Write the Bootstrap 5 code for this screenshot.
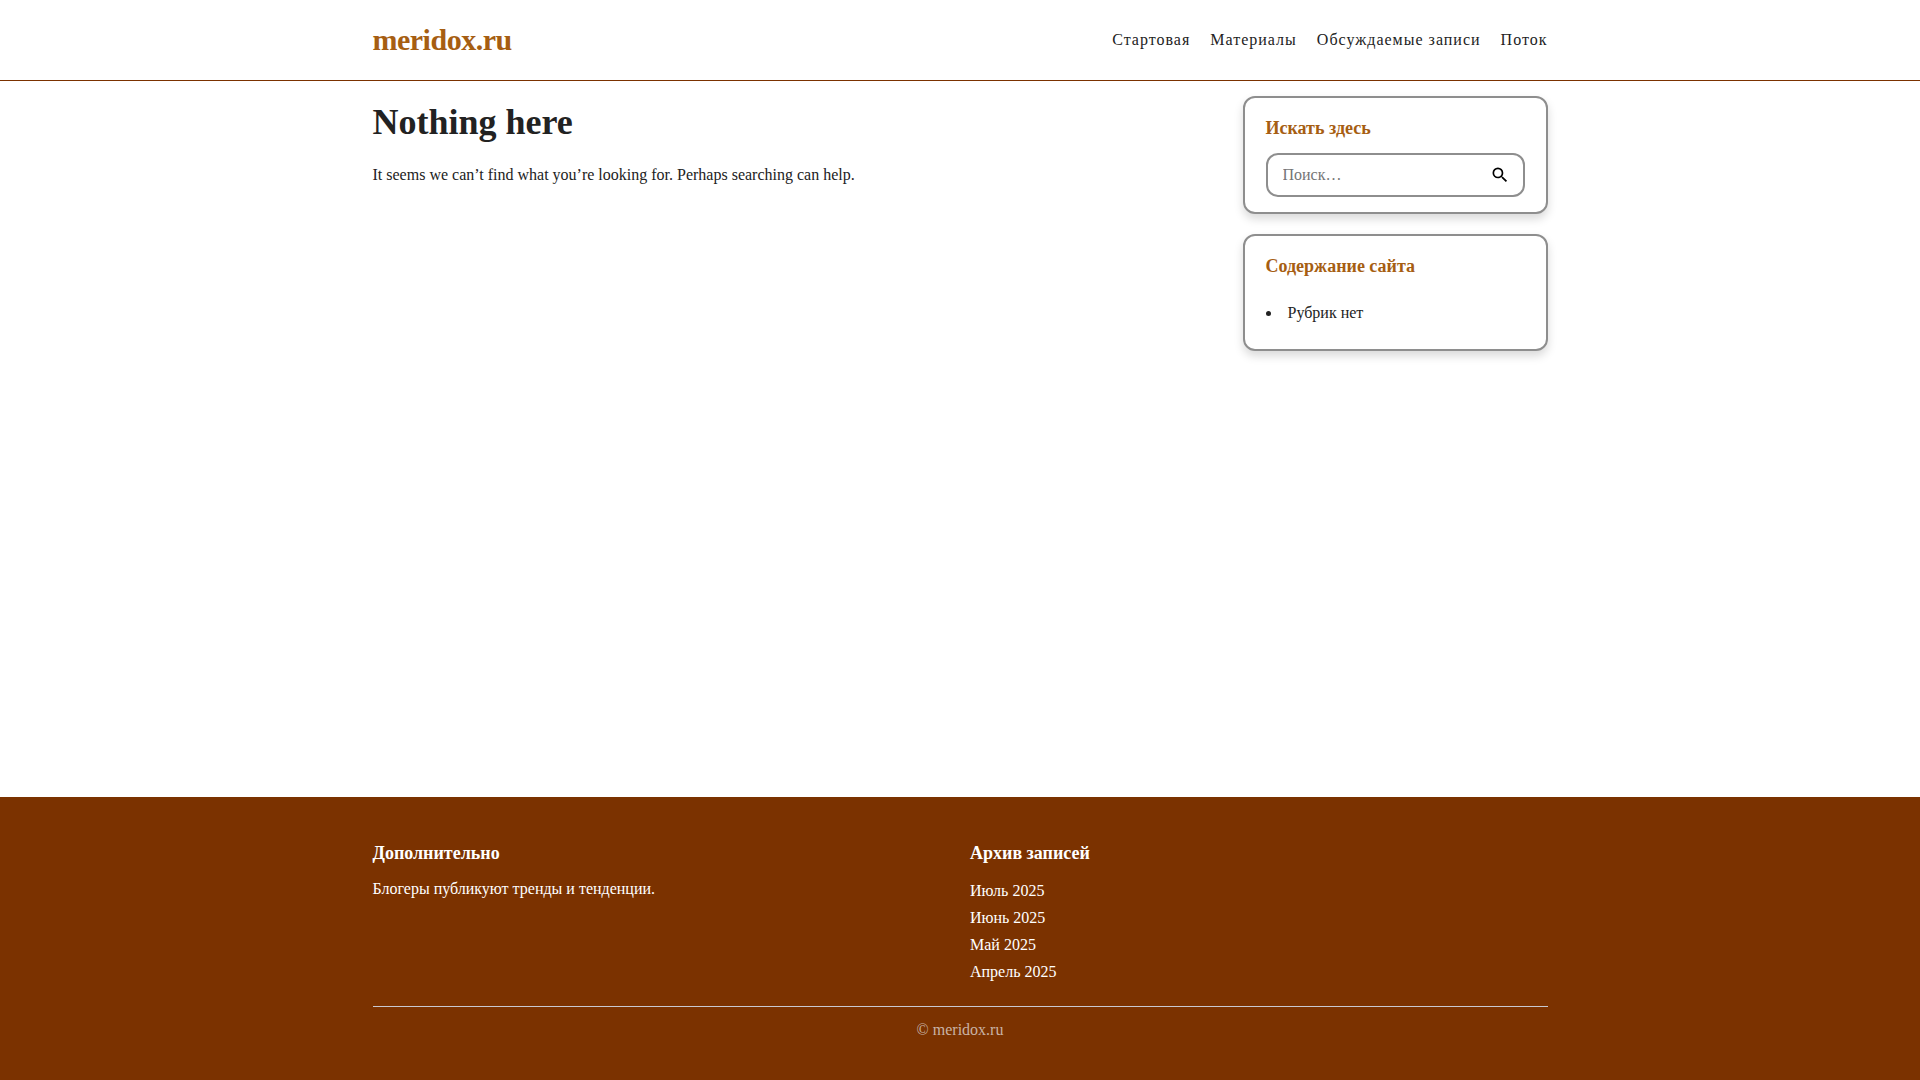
<!DOCTYPE html>
<html lang="ru">
<head>
<meta charset="utf-8">
<meta name="viewport" content="width=device-width, initial-scale=1">
<title>meridox.ru</title>
<link href="https://cdn.jsdelivr.net/npm/bootstrap@5.3.0/dist/css/bootstrap.min.css" rel="stylesheet">
<style>
  body { font-family: "Liberation Serif", "Times New Roman", serif; font-size: 16px; line-height: 24px; color: #222; background: #fff; }
  a { color: inherit; text-decoration: none; }
  a:hover { text-decoration: underline; }
  .site-wrap { width: 100%; max-width: 1215px; margin: 0 auto; padding: 0 20px; }
  .site-header { border-bottom: 1px solid #7b3200; }
  .site-bar { min-height: 80px; }
  .site-logo { font-size: 30px; line-height: 40px; font-weight: 700; letter-spacing: -0.5px; color: #a65e12; }
  .site-nav { gap: 20px; letter-spacing: 1px; }
  .site-main { padding-top: 15px; padding-bottom: 20px; }
  .page-title { font-size: 36px; line-height: 52px; font-weight: 700; margin: 0 0 15px; }
  .site-side { width: 305px; gap: 20px; }
  .widget { border: 2px solid #8e8e8e; border-radius: 12px; padding: 15px 21px; box-shadow: 0 5px 10px rgba(0,0,0,.15); background: #fff; }
  .widget-title { font-size: 18px; line-height: 30px; font-weight: 700; color: #a65e12; margin: 0 0 10px; }
  .search-box { height: 44px; border: 2px solid #8e8e8e; border-radius: 12px; padding: 0 13px; }
  .search-box input { color: #222; border: 0; outline: 0; background: transparent; padding: 0 2px; min-width: 0; }
  .search-box input::placeholder { color: #757575; opacity: 1; }
  .search-box button { border: 0; background: transparent; color: #000; padding: 0; }
  .rubrics { list-style: disc inside; margin: 0; padding: 10px 0 9px; }
  .site-footer { background: #7b3200; color: #fff; padding: 40px 0 38px; }
  .foot-title { font-size: 18px; line-height: 32px; font-weight: 700; margin: 0 0 8px; }
  .foot-cols { --bs-gutter-x: 20px; }
  .archive { line-height: 27px; }
  .foot-copy { margin-top: 21px; padding-top: 11px; border-top: 1px solid #c8c8d0; color: #c9b3a5; }
</style>
</head>
<body class="d-flex flex-column min-vh-100">
<header class="site-header">
  <div class="site-wrap site-bar d-flex flex-wrap align-items-center justify-content-between">
    <a class="site-logo" href="#">meridox.ru</a>
    <nav aria-label="Меню">
      <ul class="site-nav list-unstyled d-flex flex-wrap mb-0">
        <li><a href="#">Стартовая</a></li>
        <li><a href="#">Материалы</a></li>
        <li><a href="#">Обсуждаемые записи</a></li>
        <li><a href="#">Поток</a></li>
      </ul>
    </nav>
  </div>
</header>
<div class="site-wrap site-main d-flex flex-wrap flex-lg-nowrap flex-grow-1 align-items-start gap-4">
  <main class="flex-grow-1">
    <h1 class="page-title">Nothing here</h1>
    <p class="mb-0">It seems we can’t find what you’re looking for. Perhaps searching can help.</p>
  </main>
  <aside class="site-side d-flex flex-column flex-shrink-0">
    <section class="widget">
      <h2 class="widget-title">Искать здесь</h2>
      <form class="search-box d-flex align-items-center" role="search">
        <input class="flex-grow-1" type="search" placeholder="Поиск…" aria-label="Поиск">
        <button class="d-flex" type="submit" aria-label="Найти">
          <svg width="20" height="20" viewBox="0 0 24 24" fill="currentColor" aria-hidden="true"><path d="M15.5 14h-.79l-.28-.27A6.47 6.47 0 0 0 16 9.5 6.5 6.5 0 1 0 9.5 16c1.61 0 3.09-.59 4.23-1.57l.27.28v.79l5 4.99L20.49 19l-4.99-5zm-6 0C7.01 14 5 11.99 5 9.5S7.01 5 9.5 5 14 7.01 14 9.5 11.99 14 9.5 14z"/></svg>
        </button>
      </form>
    </section>
    <section class="widget">
      <h2 class="widget-title">Содержание сайта</h2>
      <ul class="rubrics"><li>Рубрик нет</li></ul>
    </section>
  </aside>
</div>
<footer class="site-footer">
  <div class="site-wrap">
    <div class="row foot-cols">
      <section class="col-md-6">
        <h2 class="foot-title">Дополнительно</h2>
        <p class="mb-0">Блогеры публикуют тренды и тенденции.</p>
      </section>
      <section class="col-md-6">
        <h2 class="foot-title">Архив записей</h2>
        <ul class="archive list-unstyled mb-0">
          <li><a href="#">Июль 2025</a></li>
          <li><a href="#">Июнь 2025</a></li>
          <li><a href="#">Май 2025</a></li>
          <li><a href="#">Апрель 2025</a></li>
        </ul>
      </section>
    </div>
    <div class="foot-copy text-center">© meridox.ru</div>
  </div>
</footer>
<script src="https://cdn.jsdelivr.net/npm/bootstrap@5.3.0/dist/js/bootstrap.bundle.min.js"></script>
</body>
</html>
